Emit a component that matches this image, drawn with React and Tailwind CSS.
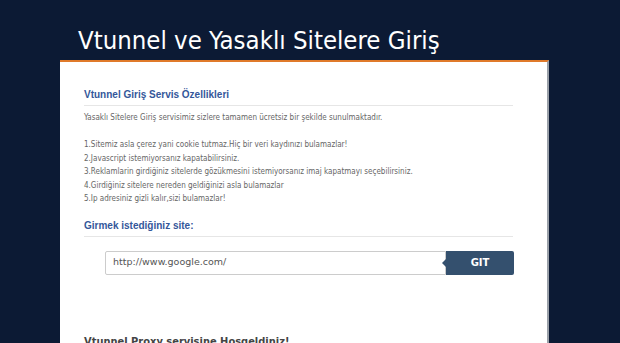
import React from 'react';

const features = [
  '1.Sitemiz asla çerez yani cookie tutmaz.Hiç bir veri kaydınızı bulamazlar!',
  '2.Javascript istemiyorsanız kapatabilirsiniz.',
  '3.Reklamlarin girdiğiniz sitelerde gözükmesini istemiyorsanız imaj kapatmayı seçebilirsiniz.',
  '4.Girdiğiniz sitelere nereden geldiğinizi asla bulamazlar',
  '5.Ip adresiniz gizli kalır,sizi bulamazlar!',
];

const App = () => {
  return (
    <div className="w-[620px] h-[343px] overflow-hidden bg-[#0c1a34]">
      {/* Header */}
      <div className="pt-[25px] pl-[78px] h-[60px]">
        <h1 className="text-white text-[25.5px] leading-[30px] font-['DejaVu_Sans_Condensed',sans-serif]">
          Vtunnel ve Yasaklı Sitelere Giriş
        </h1>
      </div>

      {/* Panel */}
      <div className="ml-[60px] w-[489px] h-[283px] bg-white border-t-2 border-[#e07a2a] border-r-2 border-r-[#9aa0a8] px-[24px] pt-[26px]">
        <h2 className="text-[#34579a] font-bold text-[10px] leading-[14px] font-['Liberation_Sans',Arial,sans-serif] pb-[3px] border-b border-[#e6e6e6] mr-[10px]">
          Vtunnel Giriş Servis Özellikleri
        </h2>
        <div className="mt-[5px] text-[#666] text-[8px] leading-[13.5px] font-['DejaVu_Sans_Condensed',Verdana,sans-serif]">
          <p>Yasaklı Sitelere Giriş servisimiz sizlere tamamen ücretsiz bir şekilde sunulmaktadır.</p>
          <p className="h-[13.5px]"></p>
          {features.map((f, i) => (
            <p key={i}>{f}</p>
          ))}
        </div>

        <h2 className="mt-[13px] text-[#34579a] font-bold text-[10px] leading-[14px] font-['Liberation_Sans',Arial,sans-serif] pb-[3px] border-b border-[#e6e6e6] mr-[10px]">
          Girmek istediğiniz site:
        </h2>

        <div className="mt-[14px] ml-[21px] flex items-stretch h-[24px] w-[409px]">
          <div className="flex-1 border border-[#cccccc] rounded-l-[2px] flex items-center pl-[7px] text-[#555] text-[9.5px] font-['DejaVu_Sans',Verdana,sans-serif]">
            http://www.google.com/
          </div>
          <div className="relative w-[68px] bg-[#34506e] rounded-r-[2px] flex items-center justify-center text-white text-[10px] font-bold font-['DejaVu_Sans',sans-serif]">
            <span className="absolute left-[-4px] top-1/2 -translate-y-1/2 w-0 h-0 border-y-[4px] border-y-transparent border-r-[4px] border-r-[#34506e]"></span>
            GIT
          </div>
        </div>

        <h3 className="mt-[59px] text-[#444] font-bold text-[11px] leading-[16px] font-['DejaVu_Sans_Condensed',Verdana,sans-serif]">
          Vtunnel Proxy servisine Hosgeldiniz!
        </h3>
      </div>
    </div>
  );
};

export default App;
